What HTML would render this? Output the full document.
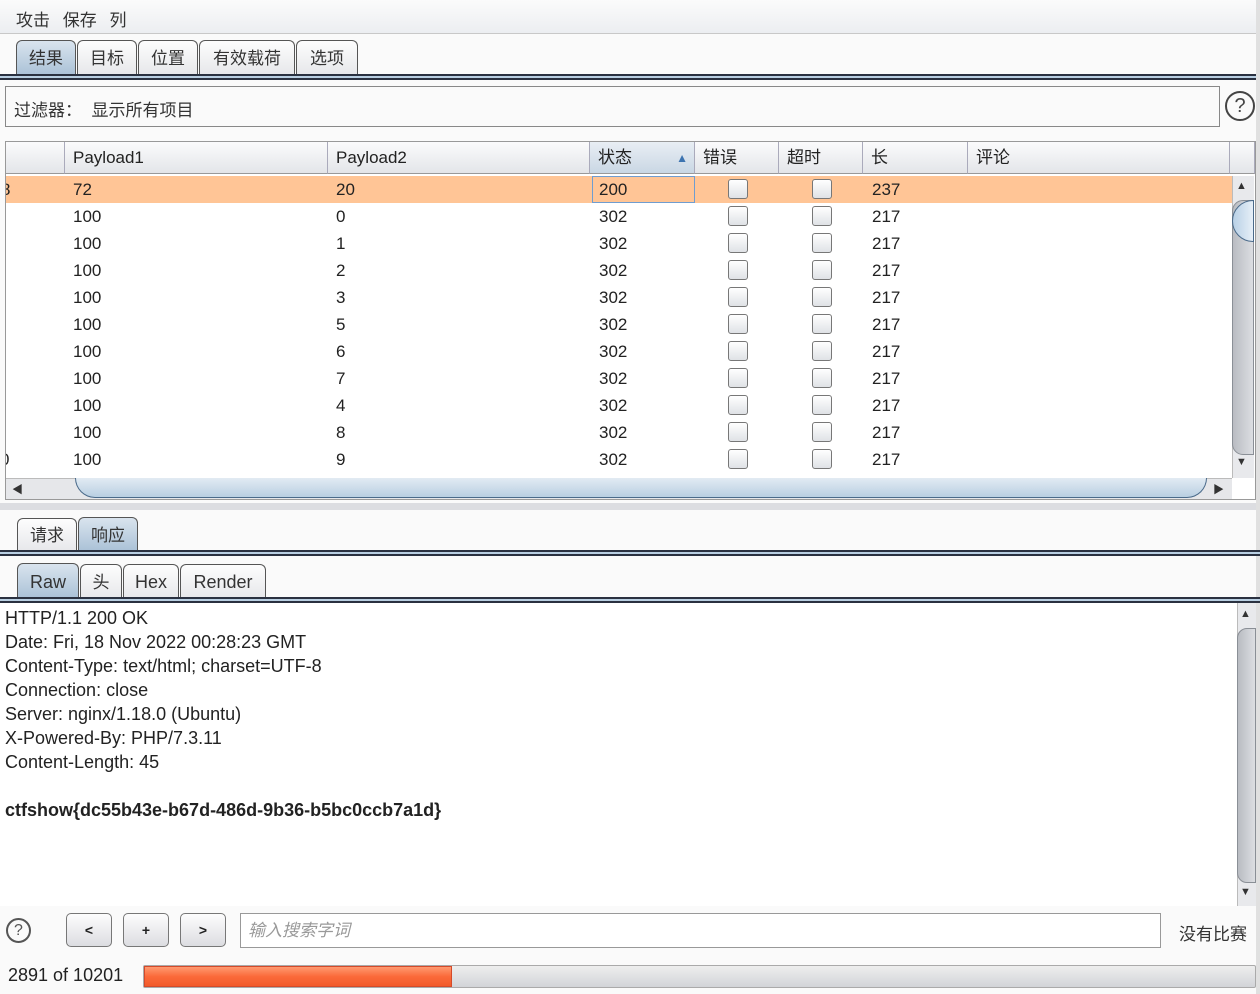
<!DOCTYPE html>
<html><head><meta charset="utf-8"><style>
*{box-sizing:border-box;margin:0;padding:0}
body{width:1260px;height:994px;background:#fafafa;font-family:"Liberation Sans","Noto Sans CJK SC",sans-serif;font-size:17px;color:#222;position:relative;overflow:hidden}
.a{position:absolute}
.tab{position:absolute;border:1px solid #555;border-bottom:none;border-radius:6px 6px 0 0;background:linear-gradient(#fdfdfd,#e6e7ea);text-align:center;font-size:17px;color:#333}
.tab.sel{background:linear-gradient(#d9e4ee,#a9c0d6)}
.bar{position:absolute;left:0;width:1260px;height:6px;border-top:2px solid #2a3140;border-bottom:2px solid #2a3140;background:#b9cfe2}
.hd{position:absolute;top:142px;height:32px;background:linear-gradient(#fbfbfc,#e3e5e9);border-right:1px solid #aab;border-bottom:1px solid #999;line-height:32px;padding-left:8px;font-size:17px}
.cell{position:absolute;font-size:17px;line-height:27px}
.cb{position:absolute;width:20px;height:20px;border:1px solid #777;border-radius:3px;background:linear-gradient(#fff,#dfe2e6)}
.btn{position:absolute;top:913px;width:46px;height:34px;border:1px solid #777;border-radius:5px;background:linear-gradient(#fdfdfd,#dcdde1);text-align:center;line-height:32px;font-size:14px;font-weight:bold}
.ln{position:absolute;left:5px;font-size:18px;line-height:24px;color:#222}
</style></head><body>
<div class="a" style="left:0;top:0;width:1260px;height:34px;background:linear-gradient(#fbfbfb,#eceef1);border-bottom:1px solid #c8c8c8"></div>
<div class="a" style="left:16px;top:6px;font-size:17px;color:#333;word-spacing:8px">攻击 保存 列</div>

<div class="tab sel" style="left:16px;top:40px;width:60px;height:36px;line-height:36px">结果</div>
<div class="tab" style="left:77px;top:40px;width:60px;height:35px;line-height:35px">目标</div>
<div class="tab" style="left:138px;top:40px;width:60px;height:35px;line-height:35px">位置</div>
<div class="tab" style="left:199px;top:40px;width:96px;height:35px;line-height:35px">有效载荷</div>
<div class="tab" style="left:296px;top:40px;width:62px;height:35px;line-height:35px">选项</div>
<div class="bar" style="top:74px"></div>

<div class="a" style="left:5px;top:86px;width:1215px;height:41px;border:1px solid #888;background:#fafafa"></div>
<div class="a" style="left:14px;top:96px;color:#333">过滤器：&nbsp;&nbsp;显示所有项目</div>
<div class="a" style="left:1225px;top:91px;width:30px;height:30px;border:2px solid #444;border-radius:50%;text-align:center;line-height:26px;font-size:20px;color:#444">?</div>

<div class="a" style="left:5px;top:141px;width:1251px;height:359px;border:1px solid #999;background:#fff"></div>
<div class="hd" style="left:6px;width:59px"></div>
<div class="hd" style="left:65px;width:263px">Payload1</div>
<div class="hd" style="left:328px;width:262px">Payload2</div>
<div class="hd" style="left:590px;width:105px;background:linear-gradient(#e9eef4,#c9d7e4)">状态<span style="position:absolute;right:6px;font-size:12px;color:#3d74b0">▲</span></div>
<div class="hd" style="left:695px;width:84px">错误</div>
<div class="hd" style="left:779px;width:84px">超时</div>
<div class="hd" style="left:863px;width:105px">长</div>
<div class="hd" style="left:968px;width:262px">评论</div>
<div class="hd" style="left:1230px;width:25px"></div>

<div class="a" style="left:6px;top:176px;width:1226px;height:27px;background:#ffc596"></div>
<div class="a" style="left:592px;top:176px;width:103px;height:27px;border:1px solid #6f9dd0"></div>
<div class="a" style="left:1px;top:176px;font-size:17px;line-height:27px">8</div>
<div class="a" style="left:0px;top:446px;font-size:17px;line-height:27px">0</div>
<div class="a" style="left:0;top:176px;width:5px;height:300px;background:#fafafa"></div>
<div class="a" style="left:5px;top:176px;width:1px;height:300px;background:#999"></div>

<div id="rows"></div>
<script>
var d=[["72","20","200","237"],["100","0","302","217"],["100","1","302","217"],["100","2","302","217"],["100","3","302","217"],["100","5","302","217"],["100","6","302","217"],["100","7","302","217"],["100","4","302","217"],["100","8","302","217"],["100","9","302","217"]];
var h="";d.forEach(function(r,i){var y=176+i*27;
h+='<div class="cell" style="left:73px;top:'+y+'px">'+r[0]+'</div><div class="cell" style="left:336px;top:'+y+'px">'+r[1]+'</div><div class="cell" style="left:599px;top:'+y+'px">'+r[2]+'</div><div class="cell" style="left:872px;top:'+y+'px">'+r[3]+'</div><div class="cb" style="left:728px;top:'+(y+3)+'px"></div><div class="cb" style="left:812px;top:'+(y+3)+'px"></div>';});
document.getElementById("rows").innerHTML=h;
</script>
<div class="a" style="left:1232px;top:176px;width:22px;height:302px;background:#e8e9ec;border-left:1px solid #bbb"></div>
<div class="a" style="left:1236px;top:180px;font-size:11px;color:#333">▲</div>
<div class="a" style="left:1232px;top:200px;width:22px;height:255px;border-radius:11px 0 0 11px;background:linear-gradient(90deg,#b9bcc2,#dcdee2);border:1px solid #8a8f96"></div>
<div class="a" style="left:1232px;top:200px;width:22px;height:42px;border-radius:21px 0 0 21px;background:linear-gradient(90deg,#b8d0e6,#e6eff7);border:1px solid #4a6a8a"></div>
<div class="a" style="left:1236px;top:456px;font-size:11px;color:#333">▼</div>
<div class="a" style="left:6px;top:478px;width:1226px;height:21px;background:#e6e7ea;border-top:1px solid #bbb"></div>
<div class="a" style="left:12px;top:481px;font-size:11px;color:#333">◀</div>
<div class="a" style="left:75px;top:478px;width:1132px;height:20px;border-radius:0 0 22px 22px;background:linear-gradient(#e2ebf3,#b9cfe2);border:1px solid #4a6a8a;border-top:none"></div>
<div class="a" style="left:1213px;top:481px;font-size:11px;color:#333">▶</div>
<div class="a" style="left:0;top:503px;width:1258px;height:7px;background:#dcdde1"></div>
<div class="a" style="left:1256px;top:0;width:4px;height:994px;background:#e0e0e0"></div>

<div class="tab" style="left:17px;top:518px;width:60px;height:34px;line-height:34px">请求</div>
<div class="tab sel" style="left:78px;top:517px;width:60px;height:35px;line-height:35px">响应</div>
<div class="bar" style="top:550px"></div>

<div class="tab sel" style="left:17px;top:563px;width:62px;height:36px;line-height:36px;font-size:18px">Raw</div>
<div class="tab" style="left:80px;top:564px;width:42px;height:35px;line-height:35px">头</div>
<div class="tab" style="left:123px;top:564px;width:56px;height:35px;line-height:35px;font-size:18px">Hex</div>
<div class="tab" style="left:180px;top:564px;width:86px;height:35px;line-height:35px;font-size:18px">Render</div>
<div class="bar" style="top:597px"></div>

<div class="a" style="left:0;top:603px;width:1237px;height:303px;background:#fff"></div>
<div class="ln" style="top:606px">HTTP/1.1 200 OK</div>
<div class="ln" style="top:630px">Date: Fri, 18 Nov 2022 00:28:23 GMT</div>
<div class="ln" style="top:654px">Content-Type: text/html; charset=UTF-8</div>
<div class="ln" style="top:678px">Connection: close</div>
<div class="ln" style="top:702px">Server: nginx/1.18.0 (Ubuntu)</div>
<div class="ln" style="top:726px">X-Powered-By: PHP/7.3.11</div>
<div class="ln" style="top:750px">Content-Length: 45</div>
<div class="ln" style="top:798px;font-weight:bold">ctfshow{dc55b43e-b67d-486d-9b36-b5bc0ccb7a1d}</div>
<div class="a" style="left:1237px;top:603px;width:19px;height:303px;background:#e8e9ec;border-left:1px solid #bbb"></div>
<div class="a" style="left:1240px;top:608px;font-size:11px;color:#333">▲</div>
<div class="a" style="left:1237px;top:628px;width:19px;height:255px;border-radius:10px 0 0 10px;background:linear-gradient(90deg,#b9bcc2,#dcdee2);border:1px solid #8a8f96"></div>
<div class="a" style="left:1240px;top:886px;font-size:11px;color:#333">▼</div>

<div class="a" style="left:6px;top:918px;width:25px;height:25px;border:2px solid #555;border-radius:50%;text-align:center;line-height:21px;font-size:16px;color:#555">?</div>
<div class="btn" style="left:66px">&lt;</div>
<div class="btn" style="left:123px">+</div>
<div class="btn" style="left:180px">&gt;</div>
<div class="a" style="left:240px;top:913px;width:921px;height:35px;border:1px solid #999;background:#fff;padding-left:7px;line-height:33px;font-style:italic;color:#999">输入搜索字词</div>
<div class="a" style="left:1179px;top:920px;color:#333">没有比赛</div>

<div class="a" style="left:8px;top:965px;font-size:18px">2891 of 10201</div>
<div class="a" style="left:143px;top:965px;width:1113px;height:23px;border:1px solid #aaa;border-radius:2px;background:linear-gradient(#eee,#d2d4d8)"></div>
<div class="a" style="left:144px;top:966px;width:308px;height:21px;border:1px solid #d44a2a;background:linear-gradient(#ff9a70,#fb6a3a 50%,#f25a2a)"></div>
</body></html>
